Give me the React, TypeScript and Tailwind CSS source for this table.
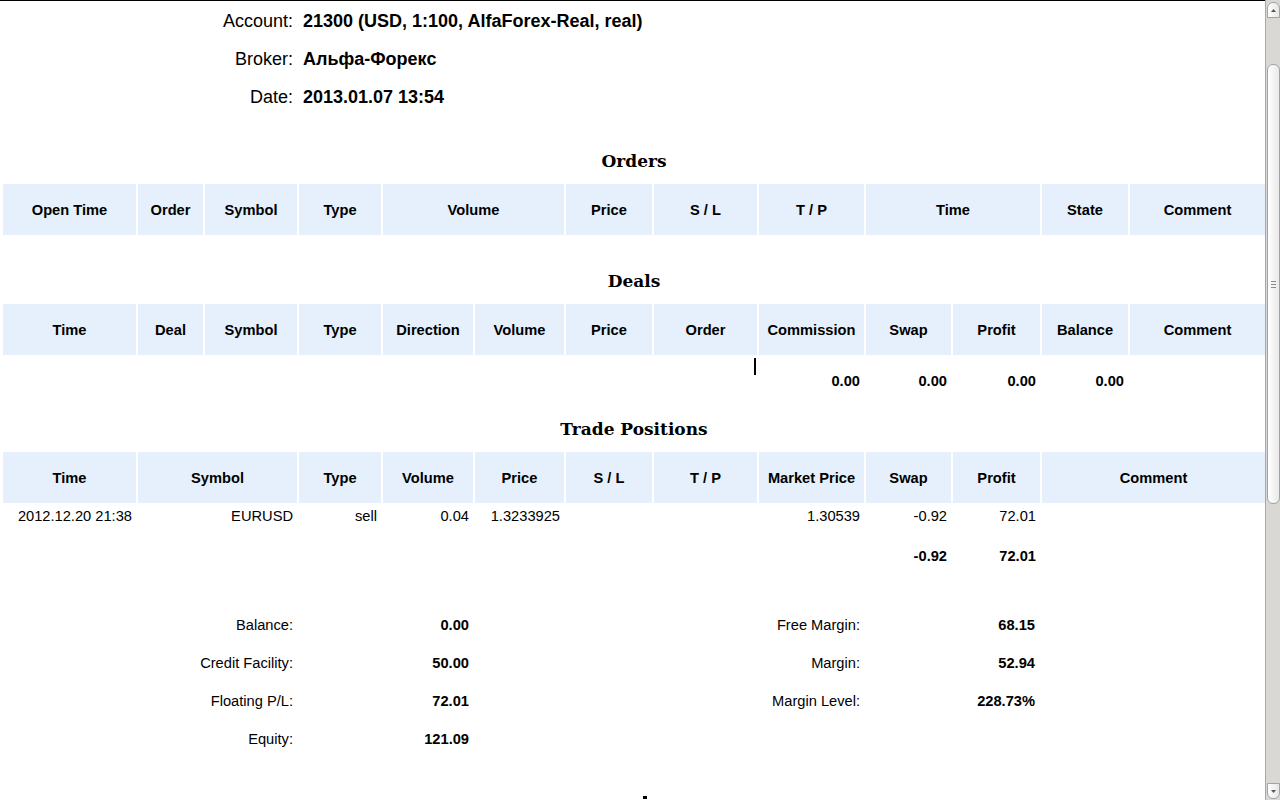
import React from "react";

const COLS =
  "grid grid-cols-[133px_65px_92px_82px_90px_89px_86px_103px_105px_85px_87px_86px_135px] gap-x-[2px]";

const SPAN: Record<number, string> = {
  1: "col-span-1",
  2: "col-span-2",
  3: "col-span-3",
  4: "col-span-4",
  8: "col-span-8",
  9: "col-span-9",
  10: "col-span-10",
};

type Head = [string, number];

const ordersHead: Head[] = [
  ["Open Time", 1],
  ["Order", 1],
  ["Symbol", 1],
  ["Type", 1],
  ["Volume", 2],
  ["Price", 1],
  ["S / L", 1],
  ["T / P", 1],
  ["Time", 2],
  ["State", 1],
  ["Comment", 1],
];

const dealsHead: Head[] = [
  ["Time", 1],
  ["Deal", 1],
  ["Symbol", 1],
  ["Type", 1],
  ["Direction", 1],
  ["Volume", 1],
  ["Price", 1],
  ["Order", 1],
  ["Commission", 1],
  ["Swap", 1],
  ["Profit", 1],
  ["Balance", 1],
  ["Comment", 1],
];

const positionsHead: Head[] = [
  ["Time", 1],
  ["Symbol", 2],
  ["Type", 1],
  ["Volume", 1],
  ["Price", 1],
  ["S / L", 1],
  ["T / P", 1],
  ["Market Price", 1],
  ["Swap", 1],
  ["Profit", 1],
  ["Comment", 2],
];

// [text, span, bold]
type Cell = [string, number, boolean?];

const positionRow: Cell[] = [
  ["2012.12.20 21:38", 1],
  ["EURUSD", 2],
  ["sell", 1],
  ["0.04", 1],
  ["1.3233925", 1],
  ["", 1],
  ["", 1],
  ["1.30539", 1],
  ["-0.92", 1],
  ["72.01", 1],
  ["", 2],
];

const positionTotals: Cell[] = [
  ["", 9],
  ["-0.92", 1, true],
  ["72.01", 1, true],
  ["", 2],
];

const dealTotals: Cell[] = [
  ["", 8],
  ["0.00", 1, true],
  ["0.00", 1, true],
  ["0.00", 1, true],
  ["0.00", 1, true],
  ["", 1],
];

const summary = [
  ["Balance:", "0.00", "Free Margin:", "68.15"],
  ["Credit Facility:", "50.00", "Margin:", "52.94"],
  ["Floating P/L:", "72.01", "Margin Level:", "228.73%"],
  ["Equity:", "121.09", "", ""],
];

const info = [
  ["Account:", "21300 (USD, 1:100, AlfaForex-Real, real)"],
  ["Broker:", "Альфа-Форекс"],
  ["Date:", "2013.01.07 13:54"],
];

const Title = ({ text }: { text: string }) => (
  <div className="h-[42px] pt-[2px] flex items-center justify-center font-['DejaVu_Serif',serif] font-bold text-[17px]">
    {text}
  </div>
);

const HeaderRow = ({ cells }: { cells: Head[] }) => (
  <div className={COLS + " mt-[2px]"}>
    {cells.map(([t, s], i) => (
      <div
        key={i}
        className={`${SPAN[s]} h-[51px] bg-[#e5f0fc] flex items-center justify-center font-bold`}
      >
        {t}
      </div>
    ))}
  </div>
);

const DataRow = ({ cells, className }: { cells: Cell[]; className: string }) => (
  <div className={COLS + " " + className}>
    {cells.map(([t, s, b], i) => (
      <div
        key={i}
        className={`${SPAN[s]} h-[24px] flex items-center justify-end pr-[4px] ${b ? "font-bold" : ""}`}
      >
        {t}
      </div>
    ))}
  </div>
);

const Scrollbar = () => (
  <div className="w-[15px] h-[800px] shrink-0 border-l border-[#a8a8a8] bg-[#dad8d4] flex flex-col items-center pt-[2px] pb-[1px]">
    <div className="w-[13px] h-[16px] rounded-t-[6px] border border-[#a3a3a3] bg-linear-to-r from-[#ffffff] to-[#e6e6e6] flex items-center justify-center">
      <svg width="5" height="3" viewBox="0 0 5 3">
        <path d="M0 3 L2.5 0 L5 3 Z" fill="#555" />
      </svg>
    </div>
    <div className="h-[46px]" />
    <div className="w-[13px] h-[440px] rounded-[6px] border border-[#a3a3a3] bg-linear-to-r from-[#ffffff] to-[#e9e9e9] flex flex-col items-center justify-center gap-[2px]">
      <div className="w-[5px] h-[1px] bg-[#8a8a8a]" />
      <div className="w-[5px] h-[1px] bg-[#8a8a8a]" />
      <div className="w-[5px] h-[1px] bg-[#8a8a8a]" />
    </div>
    <div className="flex-1" />
    <div className="w-[13px] h-[16px] rounded-b-[6px] border border-[#a3a3a3] bg-linear-to-r from-[#ffffff] to-[#e6e6e6] flex items-center justify-center">
      <svg width="5" height="3" viewBox="0 0 5 3">
        <path d="M0 0 L2.5 3 L5 0 Z" fill="#555" />
      </svg>
    </div>
  </div>
);

const App = () => {
  return (
    <div className="w-[1280px] h-[800px] flex overflow-hidden bg-white text-black font-['Liberation_Sans',Arial,sans-serif] text-[14.67px]">
      <div className="relative flex-1 h-[800px] border-t border-black pl-[3px] pt-[1px] overflow-hidden">
        {info.map(([l, v], i) => (
          <div key={i} className={COLS}>
            <div className="col-span-3 h-[38px] flex items-center justify-end pr-[4px] text-[18px]">
              {l}
            </div>
            <div className="col-span-10 h-[38px] flex items-center pl-[4px] text-[18px] font-bold">
              {v}
            </div>
          </div>
        ))}

        <div className="mt-[24px]">
          <Title text="Orders" />
          <HeaderRow cells={ordersHead} />
        </div>

        <div className="mt-[25px]">
          <Title text="Deals" />
          <HeaderRow cells={dealsHead} />
          <DataRow cells={dealTotals} className="mt-[14px]" />
        </div>

        <div className="mt-[15px]">
          <Title text="Trade Positions" />
          <HeaderRow cells={positionsHead} />
          <DataRow cells={positionRow} className="mt-[1px]" />
          <DataRow cells={positionTotals} className="mt-[16px]" />
        </div>

        <div className="mt-[38px]">
          {summary.map(([l1, v1, l2, v2], i) => (
            <div key={i} className={COLS}>
              <div className="col-span-3 h-[38px] flex items-center justify-end pr-[4px]">{l1}</div>
              <div className="col-span-2 h-[38px] flex items-center justify-end pr-[4px] font-bold">{v1}</div>
              <div className="col-span-4 h-[38px] flex items-center justify-end pr-[4px]">{l2}</div>
              <div className="col-span-2 h-[38px] flex items-center justify-end pr-[5px] font-bold">{v2}</div>
              <div className="col-span-2 h-[38px]" />
            </div>
          ))}
        </div>

        <div className="mt-[38px] flex justify-center">
          <div className="w-[4px] h-[3px] bg-black ml-[22px]" />
        </div>

        {/* text cursor */}
        <div className="absolute left-[754px] top-[357px] w-[2px] h-[17px] bg-black" />
      </div>
      <Scrollbar />
    </div>
  );
};

export default App;
